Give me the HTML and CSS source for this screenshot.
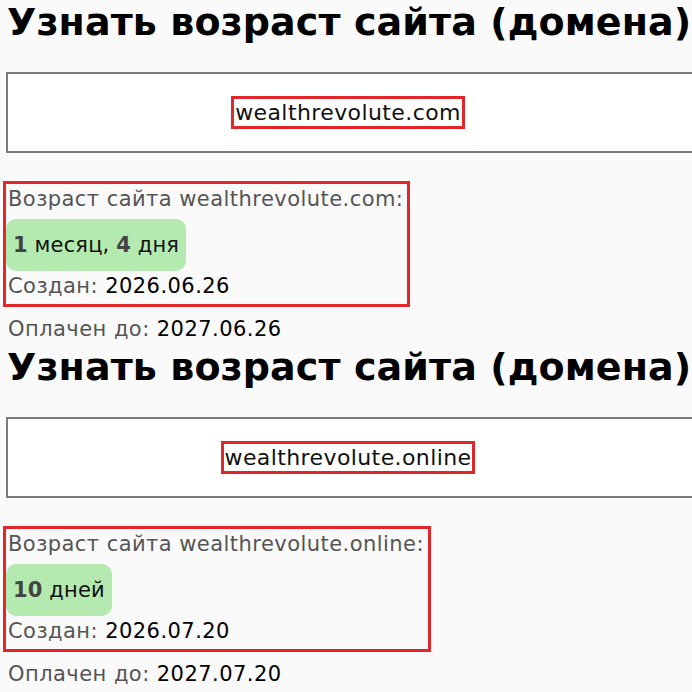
FILE: index.html
```html
<!DOCTYPE html>
<html>
<head>
  <meta charset="UTF-8">
  <title>Узнать возраст сайта (домена)</title>
  <link rel="stylesheet" href="styles.css">
</head>
<body>
  <section class="checker">
    <h1>Узнать возраст сайта (домена)</h1>
    <div class="domain-field">
      <span class="domain-name">wealthrevolute.com</span>
    </div>
    <div class="result">
      <div class="result-label">Возраст сайта wealthrevolute.com:</div>
      <div class="age-badge"><b>1</b> месяц, <b>4</b> дня</div>
      <div class="info-row">Создан: <span class="date">2026.06.26</span></div>
    </div>
    <div class="info-row paid">Оплачен до: <span class="date">2027.06.26</span></div>
  </section>

  <section class="checker">
    <h1>Узнать возраст сайта (домена)</h1>
    <div class="domain-field">
      <span class="domain-name">wealthrevolute.online</span>
    </div>
    <div class="result">
      <div class="result-label">Возраст сайта wealthrevolute.online:</div>
      <div class="age-badge"><b>10</b> дней</div>
      <div class="info-row">Создан: <span class="date">2026.07.20</span></div>
    </div>
    <div class="info-row paid">Оплачен до: <span class="date">2027.07.20</span></div>
  </section>
</body>
</html>
```

FILE: styles.css
```css
body {
  margin: 0;
  background: #fafafa;
  font-family: "DejaVu Sans", "Open Sans", sans-serif;
  color: #111;
  overflow: hidden;
}

.checker {
  padding: 0 0 0 3px;
}

h1 {
  margin: 0;
  padding: 0 0 0 4px;
  font-size: 38px;
  line-height: 44px;
  font-weight: bold;
  letter-spacing: 0.1px;
  white-space: nowrap;
  color: #000;
}

/* поле ввода домена */
.domain-field {
  margin: 28px -20px 0 3px;
  height: 77px;
  display: flex;
  align-items: center;
  justify-content: center;
  padding-right: 22px;
  background: #fff;
  border: 2px solid #7a7a7a;
}

.domain-name {
  font-size: 22px;
  line-height: 27px;
  letter-spacing: 0.4px;
  color: #111;
  padding: 0 1px;
  border: 3px solid #e3262a;
}

/* блок результата */
.result {
  display: inline-block;
  margin-top: 28px;
  padding: 1px 4px 4px 0;
  border: 3px solid #e3262a;
}

.result-label {
  padding-left: 2px;
  font-size: 21px;
  line-height: 28px;
  letter-spacing: 0.45px;
  color: #555;
}

.age-badge {
  display: inline-block;
  margin-top: 6px;
  padding: 13px 7px;
  background: #b4eab0;
  border-radius: 10px;
  font-size: 21px;
  line-height: 26px;
  letter-spacing: 0.15px;
  font-weight: 500;
  color: #111;
}

.age-badge b {
  color: #444;
}

.info-row {
  padding-left: 2px;
  font-size: 21px;
  line-height: 28px;
  letter-spacing: 0.45px;
  color: #555;
}

.result .info-row {
  margin-top: 1px;
}

.info-row .date {
  color: #000;
  font-weight: 500;
}

.paid {
  padding: 8px 0 2px 5px;
}
```
